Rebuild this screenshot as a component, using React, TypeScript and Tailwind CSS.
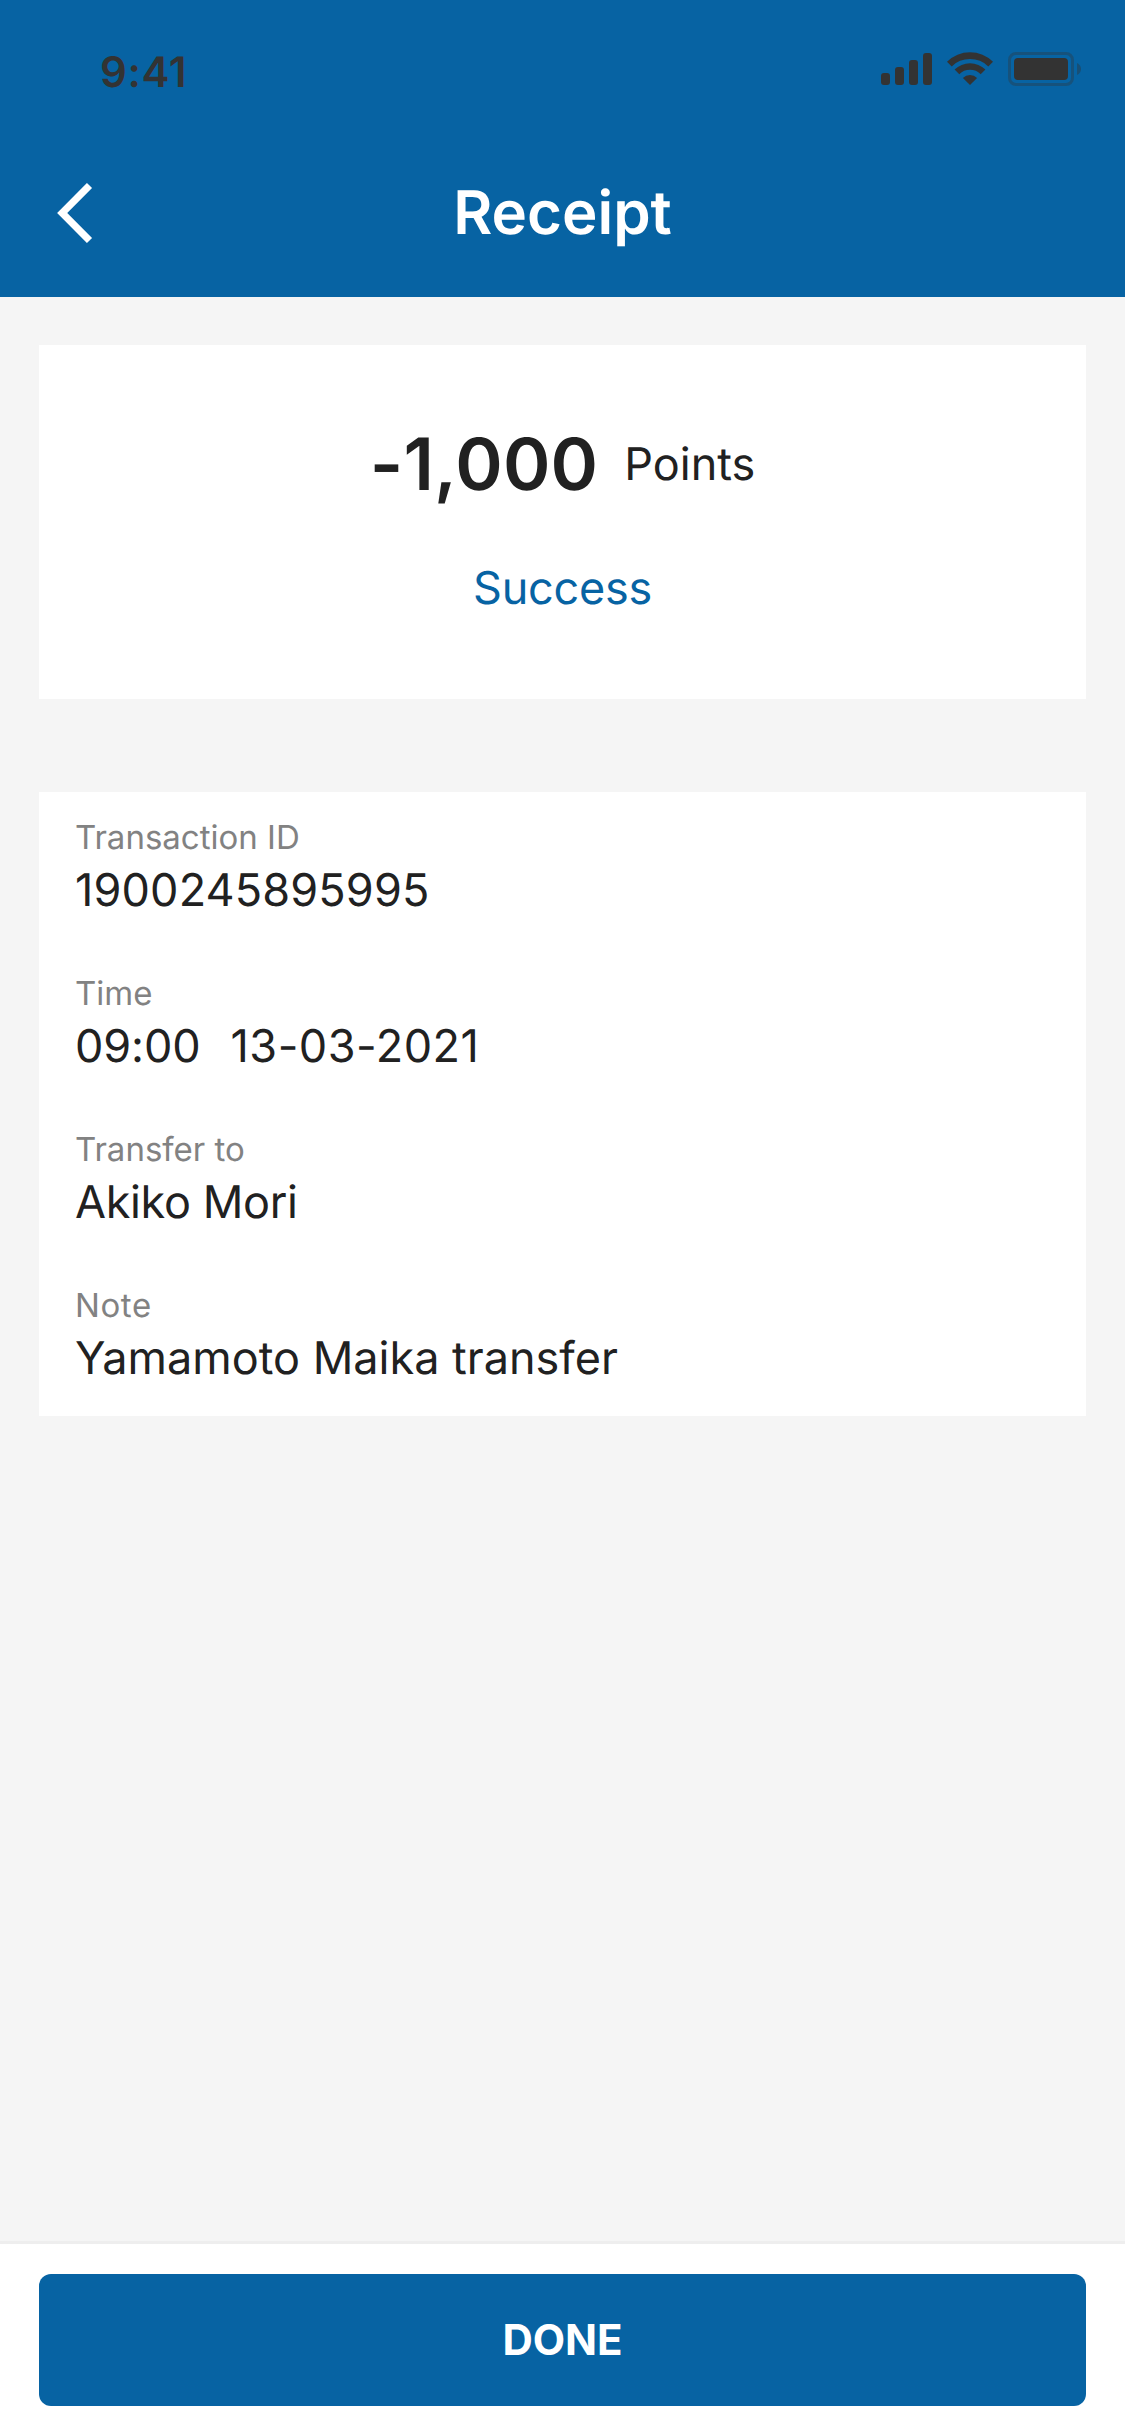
const details = [
  { label: "Transaction ID", value: [{ text: "1900245895995", tracking: "tracking-[0.16px]" }] },
  {
    label: "Time",
    value: [
      { text: "09:00", tracking: "tracking-[-0.1px]" },
      { text: "13-03-2021", tracking: "tracking-[0.5px]" },
    ],
  },
  { label: "Transfer to", value: [{ text: "Akiko Mori", tracking: "tracking-[-0.36px]" }] },
  {
    label: "Note",
    labelTracking: "tracking-[0.6px]",
    value: [{ text: "Yamamoto Maika transfer", tracking: "tracking-normal" }],
  },
];

function SignalIcon() {
  return (
    <svg width="51" height="33" viewBox="0 0 51 33" fill="#333333">
      <rect x="0" y="21" width="9" height="12" rx="3" />
      <rect x="14" y="15" width="9" height="18" rx="3" />
      <rect x="28" y="8" width="9" height="25" rx="3" />
      <rect x="42" y="1" width="9" height="32" rx="3" />
    </svg>
  );
}

function WifiIcon() {
  return (
    <svg width="46" height="33" viewBox="0 0 46 33" fill="#333333">
      <path d="M0 9.800A32.700 32.700 0 0 1 46 9.800L41.300 14.500A25.800 25.800 0 0 0 4.700 14.500Z" />
      <path d="M7.600 17.600A21.800 21.800 0 0 1 38.400 17.600L33.700 22.300A15.100 15.100 0 0 0 12.300 22.300Z" />
      <path d="M15.900 25.900A10 10 0 0 1 30.100 25.900L23 33Z" />
    </svg>
  );
}

function BatteryIcon() {
  return (
    <svg width="73" height="34" viewBox="0 0 73 34" fill="#333333">
      <rect x="1.5" y="1.5" width="63" height="31" rx="6.5" fill="none" stroke="#333333" strokeWidth="3" opacity="0.35" />
      <path d="M69 11v12c2.4-1 4-3.400 4-6s-1.600-5-4-6z" opacity="0.4" />
      <rect x="6" y="6" width="54" height="22" rx="4" />
    </svg>
  );
}

function BackIcon() {
  return (
    <svg width="36" height="60" viewBox="0 0 36 60" fill="none" stroke="#ffffff" strokeWidth="7.2">
      <path d="M32.500 2.500L5.200 30L32.500 57.500" />
    </svg>
  );
}

export default function App() {
  return (
    <div className="flex h-[2436px] w-[1125px] flex-col bg-[#f5f5f5] font-['Inter',sans-serif] text-[#212121] [text-rendering:geometricPrecision]">
      <header className="flex h-[297px] flex-col bg-[#0763a3]">
        <div className="flex h-[132px] items-start justify-between pr-11 pl-[100px]">
          <span className="mt-[47px] text-[42px] leading-[51px] font-semibold tracking-[0.6px] text-[#333333]">9:41</span>
          <div className="mt-[52px] flex items-start gap-[15px]">
            <SignalIcon />
            <WifiIcon />
            <BatteryIcon />
          </div>
        </div>
        <div className="grid h-[162px] grid-cols-[1fr_auto_1fr] items-center">
          <button className="ml-[57px] w-9" aria-label="Back">
            <BackIcon />
          </button>
          <h1 className="text-[60px] leading-[72px] font-semibold text-white">Receipt</h1>
        </div>
      </header>

      <main className="flex grow flex-col gap-[93px] px-[39px] pt-12">
        <section className="flex h-[354px] flex-col items-center bg-white pt-[75px]">
          <div className="flex h-[87px] items-center gap-[26px]">
            <span className="pt-0.5 text-[72px] leading-[87px] font-semibold tracking-[0.2px]">-1,000</span>
            <span className="text-[45px] leading-[54px]">Points</span>
          </div>
          <p className="mt-[54px] text-[45px] leading-[54px] tracking-[-0.25px] text-[#0763a3]">Success</p>
        </section>

        <dl className="flex flex-col gap-[51px] bg-white px-9 pt-[21px] pb-[30px]">
          {details.map((item) => (
            <div key={item.label}>
              <dt className={`text-[33px] leading-[48px] text-[#828282] ${item.labelTracking ?? ""}`}>{item.label}</dt>
              <dd className="flex gap-[30px] text-[45px] leading-[57px]">
                {item.value.map((part) => (
                  <span key={part.text} className={part.tracking}>
                    {part.text}
                  </span>
                ))}
              </dd>
            </div>
          ))}
        </dl>
      </main>

      <footer className="h-[195px] border-t-[3px] border-[#eeeeee] bg-white px-[39px] pt-[30px]">
        <button className="h-[132px] w-full rounded-[12px] bg-[#0763a3] pb-px text-[42px] leading-[51px] font-bold tracking-[-0.1px] text-white">
          DONE
        </button>
      </footer>
    </div>
  );
}
